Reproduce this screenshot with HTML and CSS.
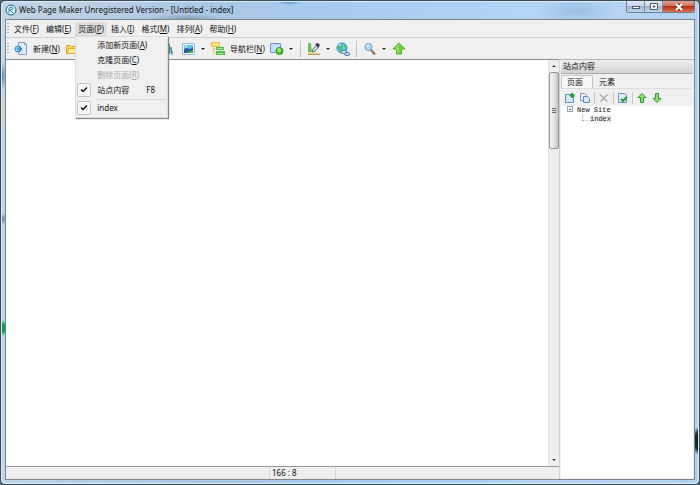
FILE: index.html
```
<!DOCTYPE html>
<html lang="zh-CN">
  <head>
    <meta charset="utf-8">
    <title>Web Page Maker</title>
    <link rel="stylesheet" href="styles.css">
  </head>
  <body>
    <div class="window">
      <header class="titlebar">
        <svg class="logo" viewBox="0 0 12 12"><circle cx="6" cy="6" r="5" fill="#e4f3fc" stroke="#17608f"/><path d="M4 9V4q3-2 4 0 0 2-3 2l3 3" fill="none" stroke="#2585bd"/></svg>
        <span class="title">Web Page Maker Unregistered Version - [Untitled - index]</span>
        <div class="controls">
          <button class="ctl" aria-label="Minimize"><svg viewBox="0 0 10 8"><rect x="1.500" y="3.500" width="7" height="2" fill="#fff" stroke="#535666"/></svg></button>
          <button class="ctl" aria-label="Maximize"><svg viewBox="0 0 10 8"><path d="M1.500 .5h7v6h-7z" fill="#fff" stroke="#535666"/><path d="M4 3h2v1H4z" fill="#bccde0" stroke="#535666"/></svg></button>
          <button class="ctl close" aria-label="Close"><svg viewBox="0 0 10 8"><path d="M2.500 1.500l5 5M7.500 1.500l-5 5" stroke="#57404a" stroke-width="4"/><path d="M2 1l6 6M8 1L2 7" stroke="#fff" stroke-width="2"/></svg></button>
        </div>
      </header>

      <div class="client">
        <nav class="menubar">
          <i class="grip"></i>
          <button><span>文件(<u>F</u>)</span></button>
          <button><span>编辑(<u>E</u>)</span></button>
          <div class="dropdown">
            <button class="open"><span>页面(<u>P</u>)</span></button>
            <div class="menu">
              <button><span>添加新页面(<u>A</u>)</span></button>
              <button><span>克隆页面(<u>C</u>)</span></button>
              <button disabled><span>删除页面(<u>R</u>)</span></button>
              <button class="checked"><svg class="check" viewBox="0 0 8 8"><path d="M1 3.500l2 2 4-4" fill="none" stroke="#111" stroke-width="1.500"/></svg>站点内容<kbd>F8</kbd></button>
              <hr>
              <button class="checked"><svg class="check" viewBox="0 0 8 8"><path d="M1 3.500l2 2 4-4" fill="none" stroke="#111" stroke-width="1.500"/></svg>index</button>
            </div>
          </div>
          <button><span>插入(<u>I</u>)</span></button>
          <button><span>格式(<u>M</u>)</span></button>
          <button><span>排列(<u>A</u>)</span></button>
          <button><span>帮助(<u>H</u>)</span></button>
        </nav>

        <div class="toolbar">
          <i class="grip"></i>
          <button><svg class="icon" viewBox="0 0 14 14"><path d="M4.500.5h6l2 2v10h-8z" fill="#dceafb" stroke="#86a5cf"/><path d="M10.500.5v2h2" fill="none" stroke="#86a5cf"/><circle cx="4" cy="7" r="3" fill="#8fd0f7" stroke="#2f8bd8"/><path d="M3 7h5M5 5l3 2-3 2" fill="none" stroke="#1c76c5"/></svg><span>新建(<u>N</u>)</span></button>
          <button class="wide" aria-label="Open"><svg class="icon" viewBox="0 0 14 14"><path d="M1.500 11.500v-8h4l1 1h6v7z" fill="#ffd95a" stroke="#d9a21b"/><path d="M2 11.500l2-5h9l-2 5z" fill="#ffed9c" stroke="#dfab2a"/></svg></button>
          <button class="roomy" aria-label="Text"><svg class="icon" viewBox="0 0 14 14"><path d="M3 11V3l4 5 3-6v10" fill="none" stroke="#2fa12d" stroke-width="2"/><path d="M9 13l3-8 1 8M10 10h4" fill="none" stroke="#2c78b8"/></svg></button>
          <button aria-label="Picture"><svg class="icon" viewBox="0 0 14 14"><path d="M.5 1.500h12v11H.5z" fill="#f2f9fe" stroke="#9cb8d6"/><path d="M2 3h9v5H2z" fill="#62c3f4"/><path d="M2 7l3-1 3 1 3-2v6H2z" fill="#235fa7"/><path d="M4 11l7-3v3z" fill="#4cb63f"/><circle cx="4" cy="4.500" r="1" fill="#fff"/></svg></button>
          <button class="caret" aria-label="Picture options"></button>
          <button><svg class="icon" viewBox="0 0 14 14"><path d="M.5.5h8v4h-8z" fill="#ffdd7c" stroke="#efb849"/><path d="M2 2.500h5" stroke="#fff0b7"/><path d="M2.500 5v6H5M2.500 7H5" fill="none" stroke="#e4c472"/><path d="M5 5h8v3H5zM5 9h9v4H5z" fill="#4abf43"/><path d="M6 6.500h6M6 11.500h7" stroke="#a4e895"/></svg><span>导航栏(<u>N</u>)</span></button>
          <button aria-label="Shape"><svg class="icon" viewBox="0 0 14 14"><path d="M.5 1.500h10v9H.5z" fill="#c4dcf8" stroke="#7294cc"/><circle cx="9.500" cy="9" r="3.500" fill="#49bd31" stroke="#268e22"/><circle cx="9" cy="8" r="2" fill="#9be878"/></svg></button>
          <button class="caret" aria-label="Shape options"></button>
          <i class="sep"></i>
          <button aria-label="Form"><svg class="icon" viewBox="0 0 14 14"><path d="M1 1h3l1 6 3 3 5 1v2H1z" fill="#e5d69a"/><path d="M1 1h3v5l2 4H1z" fill="#71bd65"/><path d="M1 12.500h12" stroke="#a7955c"/><path d="M5 10l1-3 4-4 2 2-4 4z" fill="#c7e2f5" stroke="#607589"/><path d="M8 2l3-1 2 2-2 3z" fill="#38444f"/></svg></button>
          <button class="caret" aria-label="Form options"></button>
          <button aria-label="Link"><svg class="icon" viewBox="0 0 14 14"><circle cx="6" cy="6" r="5" fill="#58cdf0" stroke="#2d8fc6"/><path d="M2 5l3-3 2 2-2 2 2 3-2 1zM8 2l3 3-2 2z" fill="#58b957"/><circle cx="4" cy="3" r="1" fill="#d8f5ff"/><rect x="5.500" y="8.500" width="5" height="3" rx="1.500" fill="#e4f1fb" stroke="#5c7f9c"/><rect x="8.500" y="10.500" width="5" height="3" rx="1.500" fill="#c5daee" stroke="#5c7f9c"/></svg></button>
          <i class="sep"></i>
          <button aria-label="Zoom"><svg class="icon" viewBox="0 0 14 14"><path d="M8 8l4 4.500" stroke="#8a705c" stroke-width="2"/><circle cx="5.500" cy="5" r="3.500" fill="#a3dcff" stroke="#7899c7"/><path d="M4 5q0-2 2-2" fill="none" stroke="#fff"/></svg></button>
          <button class="caret" aria-label="Zoom options"></button>
          <button aria-label="Publish"><svg class="icon" viewBox="0 0 14 14"><path d="M7 1l6 6H9.500v5h-5V7H1z" fill="#68d534" stroke="#52b42c"/><path d="M7 2.500L4 6h2v5" fill="none" stroke="#b9f28c"/></svg></button>
        </div>

        <div class="body">
          <main class="editor">
            <div class="page">
              <div class="canvas"></div>
              <div class="scrollbar">
                <i class="up"></i>
                <div class="thumb"></div>
                <i class="down"></i>
              </div>
            </div>
            <footer class="status">
              <span class="message"></span>
              <span class="position">166 : 8</span>
              <span class="size"></span>
            </footer>
          </main>

          <aside class="panel">
            <h2>站点内容</h2>
            <div class="tabs">
              <button class="active">页面</button>
              <button>元素</button>
            </div>
            <div class="tools">
              <button aria-label="New page"><svg viewBox="0 0 12 12"><path d="M1.500 2.500h8v8h-8z" fill="#d6eaff" stroke="#6689c7"/><path d="M8 1v5M5.500 3.500h5" stroke="#23a536" stroke-width="2"/></svg></button>
              <button aria-label="Clone page"><svg viewBox="0 0 12 12"><path d="M1.500 1.500h4l2 2v5h-6z" fill="#edf3ff" stroke="#7c8fca"/><path d="M4.500 4.500h4l2 2v4h-6z" fill="#d8e8ff" stroke="#6782bd"/></svg></button>
              <i class="sep"></i>
              <button aria-label="Delete page" disabled><svg viewBox="0 0 12 12"><path d="M2 2.500l7 7M9.500 2.500l-7 7" stroke="#aaa" stroke-width="1.500"/></svg></button>
              <i class="sep"></i>
              <button aria-label="Page properties"><svg viewBox="0 0 12 12"><path d="M1.500 1.500h6l2 2v7h-8z" fill="#d8ebff" stroke="#6d8ec8"/><path d="M4 7l2 2 4-4" fill="none" stroke="#209a37" stroke-width="2"/></svg></button>
              <i class="sep"></i>
              <button aria-label="Move up"><svg viewBox="0 0 12 12"><path d="M6 1.500l4 4H7.500v5h-3v-5H2z" fill="#91df6f" stroke="#269a35"/></svg></button>
              <button aria-label="Move down"><svg viewBox="0 0 12 12"><path d="M6 10.500l4-4H7.500v-5h-3v5H2z" fill="#91df6f" stroke="#269a35"/></svg></button>
            </div>
            <ul class="tree">
              <li><i class="collapse"></i>New Site
                <ul>
                  <li><i class="branch"></i><span class="selected">index</span></li>
                </ul>
              </li>
            </ul>
          </aside>
        </div>
      </div>
    </div>
  </body>
</html>
```

FILE: styles.css
```
* {
    box-sizing: border-box;
}
body {
    margin: 0;
    font-family: "Noto Sans", "Noto Sans CJK SC", sans-serif;
    font-size: 8px;
    line-height: 12px;
    color: #111;
    background: #59646d;
}
button {
    display: flex;
    align-items: center;
    margin: 0;
    padding: 0;
    border: 0;
    background: none;
    font: inherit;
    color: inherit;
    white-space: nowrap;
}
svg {
    display: block;
}
u {
    text-underline-offset: 1px;
}

/* window frame */
.window {
    display: flex;
    flex-direction: column;
    height: 100vh;
    padding: 0 4px 4px;
    border: 1px solid #3d4851;
    border-radius: 5px;
    box-shadow: inset 0 0 0 1px #d9edfb;
    background:
        radial-gradient(ellipse 4px 14px at 1px 75px, #4482b4, transparent),
        radial-gradient(ellipse 4px 16px at 1px 112px, #e2d5ad, transparent),
        radial-gradient(ellipse 4px 6px at 2px 218px, #6b83a3, transparent),
        radial-gradient(ellipse 5px 8px at 2px 327px, #009a45, #16a35a 50%, transparent),
        radial-gradient(ellipse 6px 14px at 697px 440px, #071d22, #15333a 60%, transparent),
        radial-gradient(ellipse 14px 4px at 288px 0, #3c83bd, transparent),
        radial-gradient(ellipse 40px 5px at 185px 18px, #7f9dbb, transparent),
        radial-gradient(ellipse 40px 12px at 575px 10px, #9bbfe2, transparent),
        linear-gradient(90deg, #c3d5e6, #abc7e3 30%, #a6cbef 45%, #b2d4f5 75%, #b4d3f1);
}
.titlebar {
    display: flex;
    align-items: center;
    height: 18px;
}
.logo {
    width: 12px;
    height: 12px;
}
.title {
    flex: 1;
    margin-left: 2px;
}
.controls {
    display: flex;
    align-self: flex-start;
    border: 1px solid #6d7d8d;
    border-top: 0;
    border-radius: 0 0 3px 3px;
    overflow: hidden;
}
.ctl {
    justify-content: center;
    width: 18px;
    height: 11px;
    border-right: 1px solid #7b8ba0;
    background: linear-gradient(#e0e9f3, #c5d4e6 45%, #9eb3cf 50%, #c2d5e9);
}
.ctl svg {
    width: 10px;
    height: 8px;
}
.close {
    width: 31px;
    border-right: 0;
    background: linear-gradient(#e4a293, #d1705c 45%, #b72e16 50%, #dc7450);
}
.client {
    flex: 1;
    display: flex;
    flex-direction: column;
    min-height: 0;
    border: 1px solid #7a858e;
    background: #f0f0f0;
}

/* menu and toolbar */
.menubar {
    display: flex;
    align-items: center;
    gap: 1px;
    height: 18px;
    padding-left: 1px;
    border-bottom: 1px solid #cfcfcf;
}
.menubar > button,
.dropdown > button {
    height: 14px;
    padding: 0 3px;
}
.menubar .open {
    background: #dedede;
}
.grip {
    width: 2px;
    height: 12px;
    margin-right: 1px;
    background: repeating-linear-gradient(#aaa 0 1px, transparent 1px 3px);
}
.dropdown {
    position: relative;
}
.menu {
    position: absolute;
    z-index: 1;
    top: 14px;
    left: 0;
    width: 93px;
    padding: 1px;
    border: 1px solid #dcdcdc;
    background: #f0f0f0;
    box-shadow: 1px 1px 1px #888;
}
.menu button {
    width: 100%;
    height: 15px;
    padding-left: 20px;
}
.menu button:disabled {
    color: #aaa;
}
.menu .checked {
    padding-left: 0;
}
.check {
    width: 14px;
    height: 14px;
    margin-right: 6px;
    padding: 2px;
    border: 1px solid #c2c2c2;
    border-radius: 2px;
    background: #f7f7f7;
}
kbd {
    margin-left: 17px;
    font: inherit;
}
hr {
    margin: 1px 0 1px 20px;
    border: 0;
    border-top: 1px solid #d4d4d4;
}
.toolbar {
    display: flex;
    align-items: center;
    gap: 5px;
    height: 21px;
    padding-left: 1px;
}
.toolbar button {
    gap: 5px;
}
.toolbar .grip {
    margin-right: 0;
}
.icon {
    width: 14px;
    height: 14px;
}
.toolbar button.wide {
    margin-right: 75px;
}
.toolbar button.roomy {
    margin-right: 4px;
}
.caret {
    width: 5px;
    height: 14px;
}
.caret::before {
    content: "";
    border: 2px solid transparent;
    border-top-color: #222;
    border-bottom: 0;
}
.sep {
    width: 1px;
    height: 16px;
    margin: 0 1px;
    background: #c6c6c6;
}

/* page */
.body {
    flex: 1;
    display: flex;
    min-height: 0;
}
.editor {
    flex: 1;
    display: flex;
    flex-direction: column;
    border-top: 1px solid #8b8b8b;
}
.page {
    flex: 1;
    display: flex;
    border-bottom: 1px solid #999;
}
.canvas {
    flex: 1;
    background: #fff;
}
.scrollbar {
    display: flex;
    flex-direction: column;
    align-items: center;
    width: 11px;
    border-left: 1px solid #e2e2e2;
    background: #efefef;
}
.up,
.down {
    margin: 5px 0;
    border: 2px solid transparent;
    border-top: 0;
    border-bottom-color: #333;
}
.down {
    margin-top: auto;
    border-top: 2px solid #333;
    border-bottom: 0;
}
.thumb {
    display: flex;
    align-items: center;
    justify-content: center;
    width: 100%;
    height: 77px;
    border: 1px solid #979797;
    border-radius: 2px;
    background: linear-gradient(90deg, #f7f7f7, #e3e3e3 50%, #c6c6c6);
}
.thumb::before {
    content: "";
    width: 4px;
    height: 5px;
    background: repeating-linear-gradient(#666 0 1px, transparent 1px 2px);
}
.status {
    display: flex;
    height: 12px;
    background: #f0edec;
}
.message {
    flex: 1;
}
.position,
.size {
    width: 66px;
    padding-left: 2px;
    border-left: 1px solid #d8d5d5;
}
.size {
    width: 224px;
}

/* site panel */
.panel {
    display: flex;
    flex-direction: column;
    width: 135px;
    padding: 0 1px 1px;
    border-top: 1px solid #b5b5b5;
    border-left: 1px solid #d0d0d0;
}
h2 {
    height: 14px;
    margin: 0;
    padding-left: 2px;
    border-bottom: 1px solid #aaa;
    background: linear-gradient(#eee, #d2d2d2);
    font-size: 8px;
    font-weight: normal;
}
.tabs {
    display: flex;
    padding-top: 1px;
    border-bottom: 1px solid #ddd;
}
.tabs button {
    width: 32px;
    height: 13px;
    padding-left: 6px;
}
.tabs .active {
    border: 1px solid #c5c5c5;
    border-bottom: 0;
    border-radius: 2px 2px 0 0;
    padding-left: 5px;
    background: #f8f8f8;
}
.tools {
    display: flex;
    align-items: center;
    gap: 3px;
    height: 17px;
    padding-left: 3px;
}
.tools svg {
    width: 12px;
    height: 12px;
}
.tools .sep {
    height: 12px;
    margin: 0;
}
.tree {
    flex: 1;
    padding: 0 0 0 6px;
    background: #fff;
    font-family: "Liberation Mono", monospace;
    font-size: 7px;
    line-height: 9px;
}
ul {
    margin: 0;
    padding: 0;
    list-style: none;
}
.tree ul {
    padding-left: 15px;
}
.collapse {
    display: inline-block;
    width: 6px;
    height: 6px;
    margin-right: 4px;
    border: 1px solid #96a5bb;
    background: linear-gradient(#3e5c9b, #3e5c9b) center / 2px 1px no-repeat;
}
.branch {
    display: inline-block;
    width: 6px;
    height: 6px;
    margin-right: 2px;
    border: dotted #aaa;
    border-width: 0 0 1px 1px;
}
.selected {
    background: #f0f0f0;
}
```
